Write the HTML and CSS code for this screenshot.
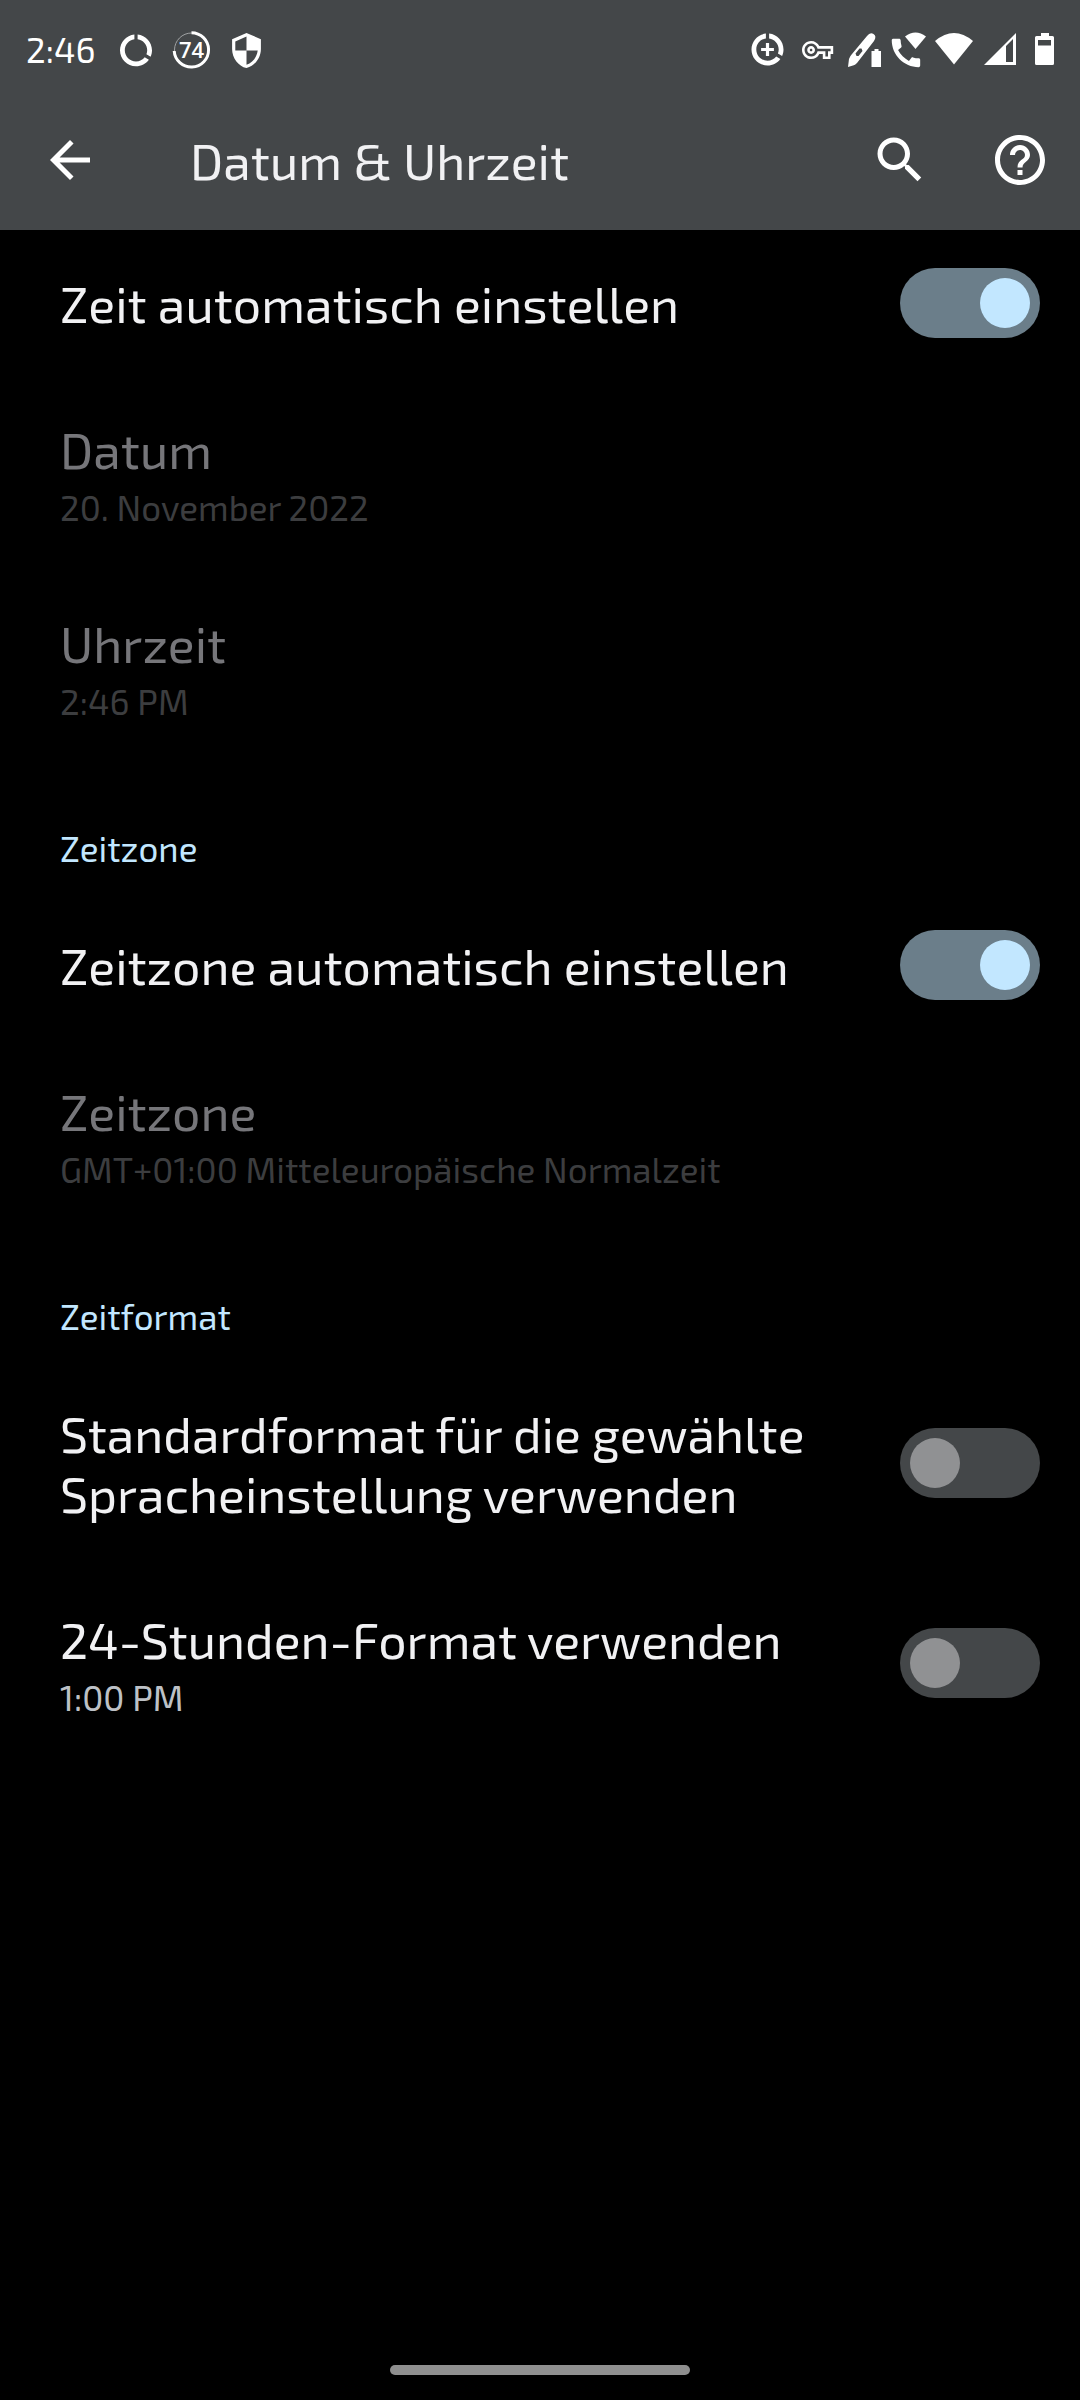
FILE: index.html
```html
<!DOCTYPE html>
<html lang="de">
<head>
<meta charset="utf-8">
<meta name="viewport" content="width=device-width, initial-scale=1">
<title>Datum &amp; Uhrzeit</title>
<link rel="stylesheet" href="styles.css">
</head>
<body>
<header class="header">
  <div class="status">
    <time class="clock">2:46</time>
    <div class="status-left">
      <svg viewBox="116 30 40 40" aria-hidden="true"><path transform="translate(116.8 31.1) scale(1.6)" d="M13 2.05v3.03c3.39.49 6 3.39 6 6.92 0 .9-.18 1.75-.48 2.54l2.6 1.53c.56-1.24.88-2.62.88-4.07 0-5.18-3.95-9.45-9-9.95zM12 19c-3.87 0-7-3.13-7-7 0-3.53 2.61-6.43 6-6.92V2.05c-5.06.5-9 4.76-9 9.95 0 5.52 4.47 10 9.99 10 3.31 0 6.24-1.61 8.06-4.09l-2.6-1.53C16.17 17.98 14.21 19 12 19z"/></svg>
      <svg viewBox="171 30 40 40" aria-hidden="true">
        <circle class="ring-track" cx="191.5" cy="50" r="17"/>
        <path class="ring" d="M191.5 32.7A17.2 17.2 0 1 1 174.2 51"/>
        <text class="ring-text" x="191.5" y="58" text-anchor="middle">74</text>
      </svg>
      <svg viewBox="226 30 40 40" aria-hidden="true"><path transform="translate(227.3 31.3) scale(1.6)" d="M12 1L3 5v6c0 5.55 3.84 10.74 9 12 5.16-1.26 9-6.45 9-12V5l-9-4zm0 10.99h7c-.53 4.12-3.28 7.79-7 8.94V12H5V6.3l7-3.11v8.8z"/></svg>
    </div>
    <div class="status-right">
      <svg viewBox="748 30 40 40" aria-hidden="true"><path transform="translate(748.3 30.3) scale(1.6)" d="M13 2.05v3.03c3.39.49 6 3.39 6 6.92 0 .9-.18 1.75-.48 2.54l2.6 1.53c.56-1.24.88-2.62.88-4.07 0-5.18-3.95-9.45-9-9.95zM12 19c-3.87 0-7-3.13-7-7 0-3.53 2.61-6.43 6-6.92V2.05c-5.06.5-9 4.76-9 9.95 0 5.52 4.47 10 9.99 10 3.31 0 6.24-1.61 8.06-4.09l-2.6-1.53C16.17 17.98 14.21 19 12 19zM13 8h-2v3H8v2h3v3h2v-3h3v-2h-3z"/></svg>
      <svg viewBox="794 30 40 40" aria-hidden="true"><path transform="translate(802 34.4) scale(1.3)" d="M22 19h-6v-4h-2.68c-1.14 2.42-3.6 4-6.32 4-3.86 0-7-3.14-7-7s3.14-7 7-7c2.72 0 5.17 1.58 6.32 4H24v6h-2v4zm-4-2h2v-4h2v-2H11.94l-.23-.67C11.01 8.34 9.11 7 7 7c-2.76 0-5 2.24-5 5s2.24 5 5 5c2.11 0 4.01-1.34 4.71-3.33l.23-.67H18v4zM7 15c-1.65 0-3-1.35-3-3s1.35-3 3-3 3 1.35 3 3-1.35 3-3 3zm0-4c-.55 0-1 .45-1 1s.45 1 1 1 1-.45 1-1-.45-1-1-1z"/></svg>
      <svg viewBox="840 30 40 40" aria-hidden="true"><path fill-rule="evenodd" d="M848 67l1-8q1-3 3-5l15-18q3-4 6.500-2t.5 7L857 63q-2 2-4 2.500zM855.500 53.500l1 2.500h2l4-5-1-2.500h-2z"/><path d="M871.500 51h3v-2h4v2h2.500v16h-9.500z"/></svg>
      <svg viewBox="886 30 40 40" aria-hidden="true"><path transform="translate(887 34) scale(1.58)" d="M20.010 15.380c-1.230 0-2.420-.2-3.530-.56-.35-.12-.74-.03-1.010.24l-1.570 1.970c-2.830-1.350-5.480-3.900-6.890-6.830l1.950-1.660c.27-.28.35-.67.24-1.020-.37-1.110-.56-2.300-.56-3.530 0-.54-.45-.99-.99-.99H4.190C3.650 3 3 3.240 3 3.990 3 13.280 10.730 21 20.010 21c.71 0 .99-.63.99-1.180v-3.450c0-.54-.45-.99-.99-.99z"/><path d="M905 36.500q10.500-8 21 0L915.500 49z"/></svg>
      <svg viewBox="932 30 40 40" aria-hidden="true"><path d="M935 41q19-16 38 0L954 64.500z"/></svg>
      <svg viewBox="978 30 40 40" aria-hidden="true"><path fill-rule="evenodd" d="M984 65L1016 33v32zM1006 46v16h7V39z"/></svg>
      <svg viewBox="1024 30 40 40" aria-hidden="true"><path fill-rule="evenodd" d="M1041 33h8v3h3.500q1.500 0 1.500 1.500v26q0 1.500-1.500 1.500h-16q-1.500 0-1.500-1.500v-26q0-1.500 1.500-1.500h4.500zM1038 40v5.500h13V40z"/></svg>
    </div>
  </div>
  <div class="toolbar">
    <button class="icon-button" type="button" aria-label="Zurück"><svg viewBox="0 0 24 24"><path d="M20 11H7.830l5.590-5.590L12 4l-8 8 8 8 1.410-1.410L7.830 13H20z"/></svg></button>
    <h1 class="title">Datum &amp; Uhrzeit</h1>
    <div class="actions">
      <button class="icon-button" type="button" aria-label="Suchen"><svg viewBox="0 0 24 24"><path d="M15.500 14h-.79l-.28-.27C15.410 12.590 16 11.110 16 9.500 16 5.910 13.090 3 9.500 3S3 5.910 3 9.500 5.910 16 9.500 16c1.610 0 3.090-.59 4.230-1.570l.27.28v.79l5 4.990L20.490 19l-4.990-5zm-6 0C7.010 14 5 11.990 5 9.500S7.010 5 9.500 5 14 7.010 14 9.500 11.990 14 9.500 14z"/></svg></button>
      <button class="icon-button" type="button" aria-label="Hilfe"><svg viewBox="0 0 24 24"><path d="M11 18h2v-2h-2v2zm1-16C6.480 2 2 6.480 2 12s4.480 10 10 10 10-4.480 10-10S17.520 2 12 2zm0 18c-4.410 0-8-3.590-8-8s3.590-8 8-8 8 3.590 8 8-3.590 8-8 8zm0-14c-2.210 0-4 1.790-4 4h2c0-1.100.9-2 2-2s2 .9 2 2c0 2-3 1.750-3 5h2c0-2.250 3-2.500 3-5 0-2.210-1.790-4-4-4z"/></svg></button>
    </div>
  </div>
</header>
<main class="settings">
  <label class="item">
    <span class="item-text"><span class="item-title">Zeit automatisch einstellen</span></span>
    <input class="switch" type="checkbox" role="switch" checked>
  </label>
  <div class="item item-disabled">
    <div class="item-text"><div class="item-title">Datum</div><div class="item-summary">20. November 2022</div></div>
  </div>
  <div class="item item-disabled">
    <div class="item-text"><div class="item-title">Uhrzeit</div><div class="item-summary">2:46 PM</div></div>
  </div>
  <h2 class="category">Zeitzone</h2>
  <label class="item">
    <span class="item-text"><span class="item-title">Zeitzone automatisch einstellen</span></span>
    <input class="switch" type="checkbox" role="switch" checked>
  </label>
  <div class="item item-disabled">
    <div class="item-text"><div class="item-title">Zeitzone</div><div class="item-summary">GMT+01:00 Mitteleuropäische Normalzeit</div></div>
  </div>
  <h2 class="category">Zeitformat</h2>
  <label class="item">
    <span class="item-text"><span class="item-title">Standardformat für die gewählte Spracheinstellung verwenden</span></span>
    <input class="switch" type="checkbox" role="switch">
  </label>
  <label class="item">
    <span class="item-text"><span class="item-title">24-Stunden-Format verwenden</span><span class="item-summary">1:00 PM</span></span>
    <input class="switch" type="checkbox" role="switch">
  </label>
</main>
<footer class="nav"><div class="nav-handle"></div></footer>
</body>
</html>
```
FILE: styles.css
```css
* {
  box-sizing: border-box;
}

body {
  margin: 0;
  min-height: 100vh;
  display: flex;
  flex-direction: column;
  background: #000;
  color: #f1f1f3;
  font-family: "Exo 2", Roboto, sans-serif;
}

svg {
  display: block;
  fill: #fff;
  overflow: visible;
}

.header {
  background: #444749;
}

.status {
  display: flex;
  align-items: center;
  height: 90px;
  padding: 10px 16px 0 26px;
}

.status svg {
  width: 40px;
  height: 40px;
}

.clock {
  width: 90px;
  padding-bottom: 2px;
  font-size: 35px;
  line-height: 40px;
  color: #fff;
}

.status-left {
  display: flex;
  gap: 15px;
}

.status-right {
  display: flex;
  gap: 6px;
  margin-left: auto;
}

.ring-track {
  fill: none;
  stroke: #a0a2a3;
  stroke-width: 1;
}

.ring {
  fill: none;
  stroke: #fff;
  stroke-width: 3;
}

.ring-text {
  font-family: "Open Sans", sans-serif;
  font-size: 22px;
  font-weight: 600;
}

.toolbar {
  display: flex;
  align-items: center;
  height: 140px;
  padding: 0 30px 0 40px;
}

.icon-button {
  padding: 0;
  border: 0;
  background: none;
}

.icon-button svg {
  width: 60px;
  height: 60px;
}

.title {
  margin: 0 0 0 90px;
  font-size: 50px;
  font-weight: 400;
  line-height: 60px;
}

.actions {
  display: flex;
  gap: 60px;
  margin-left: auto;
}

.settings {
  flex: 1;
}

.item {
  display: flex;
  align-items: center;
  gap: 60px;
  padding: 0 40px 0 60px;
}

.item-text {
  flex: 1;
  padding: 43px 0 39px;
}

.item-title {
  display: block;
  padding-bottom: 4px;
  font-size: 50px;
  line-height: 60px;
}

.item-summary {
  display: block;
  font-size: 35px;
  line-height: 48px;
  color: #bdc1c6;
}

.item-disabled .item-title {
  color: #76767a;
}

.item-disabled .item-summary {
  color: #3c3d3f;
}

.category {
  margin: 0;
  padding: 60px 60px 20px;
  font-size: 35px;
  font-weight: 400;
  line-height: 48px;
  color: #c2e7ff;
}

.switch {
  appearance: none;
  flex: none;
  display: flex;
  width: 140px;
  height: 70px;
  margin: 0;
  padding: 10px;
  border-radius: 35px;
  background: #444749;
}

.switch::before {
  content: "";
  width: 50px;
  height: 50px;
  border-radius: 50%;
  background: #909193;
}

.switch:checked {
  justify-content: flex-end;
  background: #6b7e8a;
}

.switch:checked::before {
  background: #c2e7ff;
}

.nav {
  display: flex;
  justify-content: center;
  padding-bottom: 25px;
}

.nav-handle {
  width: 300px;
  height: 10px;
  border-radius: 5px;
  background: #8f8f8f;
}
```
